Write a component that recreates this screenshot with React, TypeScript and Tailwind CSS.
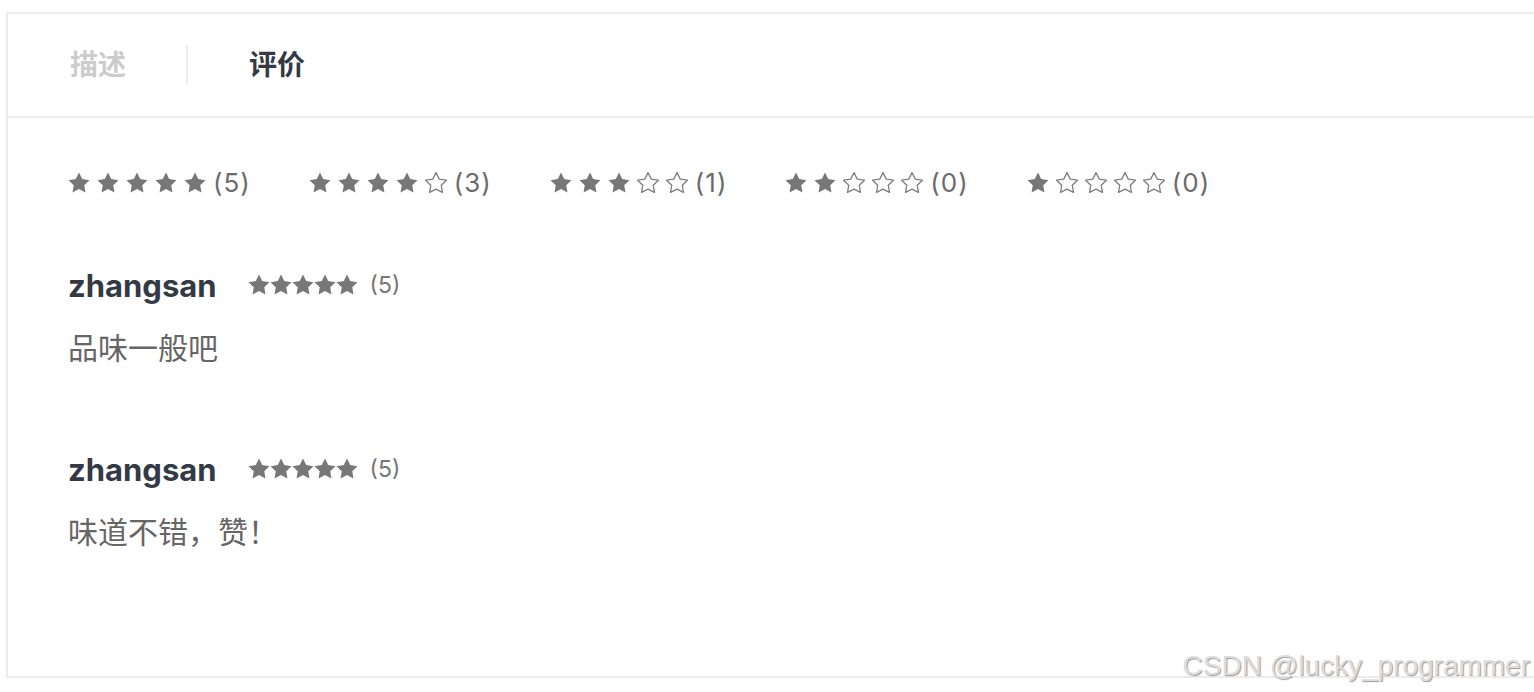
import React from 'react';

const STAR = '12 2 15.09 8.26 22 9.27 17 14.14 18.18 21.02 12 17.77 5.82 21.02 7 14.14 2 9.27 8.91 8.26';

const Star = ({ filled, size }: { filled: boolean; size: number }) => (
  <svg width={size} height={size} viewBox="1.5 1.5 21 21" className="shrink-0">
    {filled ? (
      <polygon points={STAR} fill="#777777" />
    ) : (
      <polygon points={STAR} fill="none" stroke="#808080" strokeWidth="1.3" strokeLinejoin="round" />
    )}
  </svg>
);

const reviews = [
  { name: 'zhangsan', rating: 5, text: '品味一般吧' },
  { name: 'zhangsan', rating: 5, text: '味道不错，赞！' },
];

const summary = [
  { stars: 5, count: 5 },
  { stars: 4, count: 3 },
  { stars: 3, count: 1 },
  { stars: 2, count: 0 },
  { stars: 1, count: 0 },
];

export default function App() {
  return (
    <div className="relative h-[692px] w-full overflow-hidden bg-white font-['Inter','Noto_Sans_CJK_SC',sans-serif]">
      <div className="ml-[6px] mt-[12px] h-[666px] w-[1560px] border-2 border-[#ebebeb]">
        {/* tabs */}
        <div className="flex h-[104px] items-center border-b-2 border-[#ebebeb]">
          <div className="flex h-[40px] items-center border-r-2 border-[#ececec] pl-[62px] pr-[60px] text-[28px] font-bold text-[#cccccc]">
            描述
          </div>
          <div className="flex h-[40px] items-center pl-[61px] text-[28px] font-bold text-[#333a46]">
            评价
          </div>
        </div>

        <div className="pl-[60px] pt-[52px]">
          {/* rating summary */}
          <div className="flex h-[26px] items-center gap-[58px]">
            {summary.map((s) => (
              <div key={s.stars} className="flex items-center">
                <div className="flex items-center gap-[7px]">
                  {[1, 2, 3, 4, 5].map((i) => (
                    <Star key={i} filled={i <= s.stars} size={22} />
                  ))}
                </div>
                <span className="ml-[7px] text-[26px] leading-none tracking-[1px] text-[#6b6b6b]">({s.count})</span>
              </div>
            ))}
          </div>

          {/* reviews */}
          {reviews.map((r, idx) => (
            <div key={idx} className={idx === 0 ? 'mt-[71px]' : 'mt-[85px]'}>
              <div className="flex h-[36px] items-center">
                <span className="text-[31px] font-bold leading-none text-[#333a46]">{r.name}</span>
                <div className="ml-[31px] flex items-center">
                  {[1, 2, 3, 4, 5].map((i) => (
                    <Star key={i} filled={i <= r.rating} size={22} />
                  ))}
                </div>
                <span className="ml-[12px] text-[23px] leading-none text-[#777777]">({r.rating})</span>
              </div>
              <div className="mt-[27px] h-[36px] text-[30px] leading-[36px] text-[#666666]">{r.text}</div>
            </div>
          ))}
        </div>
      </div>

      <div className="absolute right-[4px] top-[645px] font-['Liberation_Sans',sans-serif] text-[28px] text-[#dddddd] [text-shadow:1px_1px_1px_#9a9a9a]">
        CSDN @lucky_programmer
      </div>
    </div>
  );
}
